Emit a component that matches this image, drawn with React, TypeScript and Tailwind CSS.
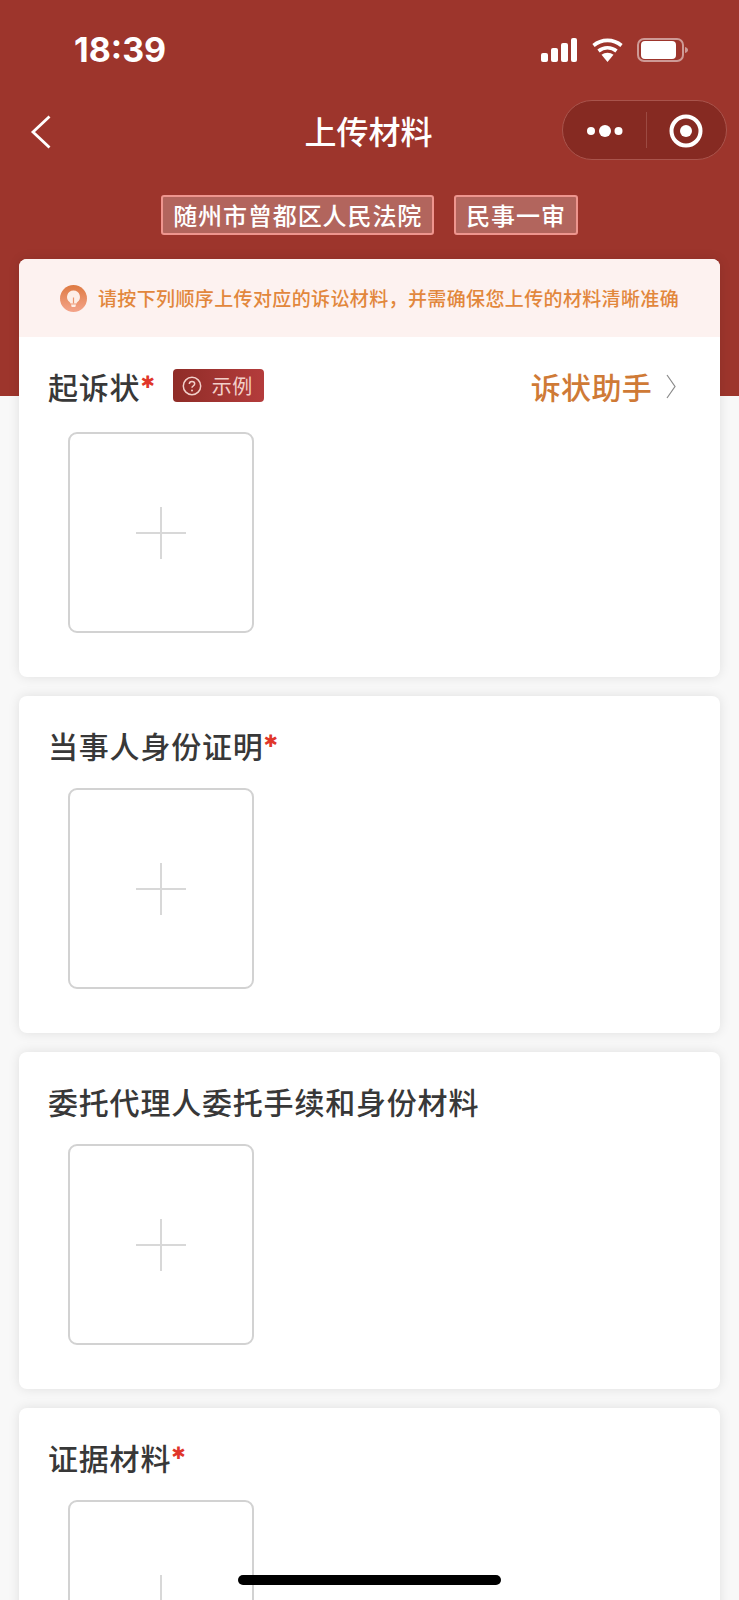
import { ReactNode } from 'react';

const CJK = { fontFamily: '"Noto Sans CJK SC", "Noto Sans", sans-serif' };

function Required() {
  return <span className="self-start mt-[1px] text-[17px] leading-[30px] font-bold text-[#e0362a]" style={{ fontFamily: '"DejaVu Sans", sans-serif' }}>✱</span>;
}

function UploadBox() {
  return (
    <div className="ml-[49px] w-[186px] h-[201px] rounded-[9px] border-2 border-[#d2d2d2] bg-white flex items-center justify-center">
      <svg width="52" height="54" viewBox="0 0 52 54" className="text-[#d8d8d8]">
        <path d="M1 27H51M26 1V53" stroke="currentColor" strokeWidth="2" fill="none" />
      </svg>
    </div>
  );
}

function Title({ children }: { children: ReactNode }) {
  return <span className="text-[30px] leading-[40px] tracking-[0.8px] font-medium text-[#383838]">{children}</span>;
}

function MaterialCard({ title, required }: { title: string; required?: boolean }) {
  return (
    <section className="rounded-[8px] bg-white shadow-[0_0_12px_rgba(0,0,0,0.1)] pt-[29px] pb-[44px]">
      <div className="flex items-center h-[40px] pl-[29px] mb-[23px]">
        <Title>{title}</Title>
        {required && <Required />}
      </div>
      <UploadBox />
    </section>
  );
}

function StatusBar() {
  return (
    <div className="flex items-center justify-between h-[98px] pl-[74px] pr-[50px] pt-[1px]">
      <span className="text-[34px] font-bold text-white" style={{ fontFamily: 'Inter, sans-serif' }}>18:39</span>
      <svg width="148" height="24" viewBox="0 0 148 24" className="text-white">
        <g fill="currentColor">
          <rect x="0" y="15" width="7" height="9" rx="2" />
          <rect x="10" y="10" width="7" height="14" rx="2" />
          <rect x="20" y="5" width="7" height="19" rx="2" />
          <rect x="30" y="0" width="6" height="24" rx="2" />
          <path d="M66.5 24l-6-7.2c3.4-2.8 8.600-2.800 12 0z" />
          <rect x="100" y="3" width="35" height="18" rx="4" />
          <path d="M144 9v6c2-.6 3-1.600 3-3s-1-2.400-3-3z" opacity="0.5" />
        </g>
        <g fill="none" stroke="currentColor" strokeWidth="3.600">
          <path d="M52.500 7.500c8.200-6.800 19.800-6.800 28 0" />
          <path d="M57.500 13c5.400-4.400 12.600-4.400 18 0" />
        </g>
        <rect x="97" y="1" width="45" height="22" rx="6" fill="none" stroke="currentColor" strokeOpacity="0.5" strokeWidth="2" />
      </svg>
    </div>
  );
}

function NavBar() {
  return (
    <div className="flex items-center justify-between h-[64px] pl-[30px] pr-[12px]">
      <svg width="22" height="34" viewBox="0 0 22 34" className="text-white mt-[3px]">
        <path d="M19.500 1.500L3 17l16.500 15.500" stroke="currentColor" strokeWidth="2.800" fill="none" />
      </svg>
      <h1 className="text-[32px] leading-[40px] font-medium text-white ml-[123px]">上传材料</h1>
      <div className="flex items-center w-[165px] h-[60px] rounded-full bg-[#862a22] border border-[#a9544c]">
        <svg width="83" height="60" viewBox="0 0 83 60" className="text-white shrink-0">
          <g fill="currentColor">
            <circle cx="28" cy="31" r="4" />
            <circle cx="42" cy="31" r="6" />
            <circle cx="55.500" cy="31" r="4" />
          </g>
        </svg>
        <div className="w-px h-[36px] shrink-0 bg-[#9c4a42]" />
        <svg width="79" height="60" viewBox="0 0 79 60" className="text-white shrink-0">
          <circle cx="39" cy="31" r="14.500" fill="none" stroke="currentColor" strokeWidth="4" />
          <circle cx="39" cy="31" r="6" fill="currentColor" />
        </svg>
      </div>
    </div>
  );
}

function Tag({ children }: { children: ReactNode }) {
  return (
    <span className="flex items-center justify-center h-[40px] px-[10px] rounded-[3px] border-2 border-[#ee958e] bg-[#b2655d] text-[24px] tracking-[0.9px] font-medium text-white">
      {children}
    </span>
  );
}

function NoticeIcon() {
  return (
    <svg width="27" height="27" viewBox="0 0 27 27" className="shrink-0">
      <defs>
        <linearGradient id="bulb" x1="0" y1="0" x2="0" y2="1">
          <stop offset="0" stopColor="#de7a42" />
          <stop offset="1" stopColor="#f4a48a" />
        </linearGradient>
      </defs>
      <circle cx="13.500" cy="13.500" r="13.500" fill="url(#bulb)" />
      <path d="M13.500 5.500a6.500 6.500 0 0 0-3.700 11.800c.4.300.6.700.6 1.200h6.200c0-.5.200-.9.600-1.200a6.500 6.500 0 0 0-3.700-11.800z" fill="#fdeee6" />
      <path d="M11 19.500h5l-.7 2.500h-3.600z" fill="#fdeee6" />
      <path d="M13.500 18.500v-6" stroke="#eb9670" strokeWidth="1.200" />
    </svg>
  );
}

function ExampleBadge() {
  return (
    <span className="flex items-center ml-[18px] mb-[1px] w-[91px] h-[33px] pl-[9px] rounded-[4px] bg-gradient-to-r from-[#8f2c27] to-[#b43c3c] text-[#f2cfc9]">
      <svg width="20" height="20" viewBox="0 0 20 20" className="shrink-0">
        <circle cx="10" cy="10" r="8.700" fill="none" stroke="currentColor" strokeWidth="1.500" />
        <path d="M7.300 8c0-1.600 1.200-2.600 2.700-2.600s2.700 1 2.700 2.400c0 1.300-.9 1.800-1.700 2.400-.6.400-1 .8-1 1.600" fill="none" stroke="currentColor" strokeWidth="1.500" />
        <circle cx="10" cy="14.400" r="1" fill="currentColor" />
      </svg>
      <span className="ml-[10px] text-[20px] leading-[33px] tracking-[0.5px]">示例</span>
    </span>
  );
}

export default function App() {
  return (
    <div className="relative h-[1600px] overflow-hidden bg-[#f8f8f8]" style={CJK}>
      <div className="h-[396px] bg-[#9d352c]">
        <StatusBar />
        <NavBar />
        <div className="flex justify-center gap-[20px] mt-[33px]">
          <Tag>随州市曾都区人民法院</Tag>
          <Tag>民事一审</Tag>
        </div>
      </div>

      <div className="-mt-[137px] mx-[19px] flex flex-col gap-[19px]">
        <section className="rounded-[8px] bg-white shadow-[0_0_12px_rgba(0,0,0,0.1)] overflow-hidden pb-[44px]">
          <div className="flex items-center h-[78px] pl-[41px] bg-[#fdf2f0]">
            <NoticeIcon />
            <span className="ml-[11px] text-[19px] tracking-[0.37px] font-medium text-[#e2873c] whitespace-nowrap">
              请按下列顺序上传对应的诉讼材料，并需确保您上传的材料清晰准确
            </span>
          </div>
          <div className="flex items-center h-[40px] mt-[29px] mb-[26px] pl-[29px] pr-[44px]">
            <Title>起诉状</Title>
            <Required />
            <ExampleBadge />
            <span className="ml-auto mb-[1px] text-[30px] leading-[40px] tracking-[0.3px] font-medium text-[#cf7a36]">诉状助手</span>
            <svg width="10" height="25" viewBox="0 0 10 25" className="ml-[14px] text-[#8a8a8a]">
              <path d="M1 1l8 11.500L1 24" fill="none" stroke="currentColor" strokeWidth="1.200" />
            </svg>
          </div>
          <UploadBox />
        </section>
        <MaterialCard title="当事人身份证明" required />
        <MaterialCard title="委托代理人委托手续和身份材料" />
        <MaterialCard title="证据材料" required />
      </div>

      <div className="absolute left-[238px] top-[1575px] w-[263px] h-[10px] rounded-full bg-black" />
    </div>
  );
}
